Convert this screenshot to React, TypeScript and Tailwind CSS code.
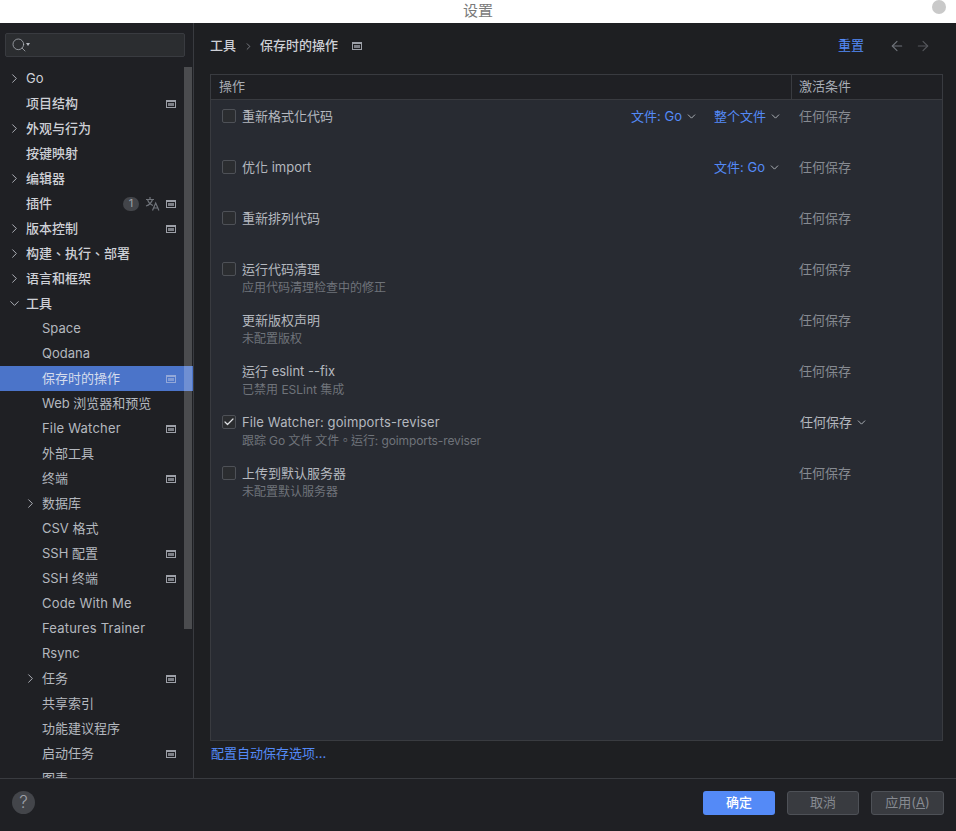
import type { ReactNode } from "react";
import { ChevronDown, ChevronRight, ArrowLeft, ArrowRight, Search, Check } from "lucide-react";

const FONT = "[font-family:Inter,'Noto_Sans_CJK_TC',sans-serif]";

function ProjectIcon({ color = "#9da0a8" }: { color?: string }) {
  return (
    <svg width="10" height="10" viewBox="0 0 10 10" fill="none" aria-hidden="true">
      <rect x="0.5" y="1.5" width="9" height="7" stroke={color} />
      <rect x="2" y="4" width="6" height="3" fill={color} fillOpacity="0.75" />
      <rect x="0.5" y="1.5" width="9" height="1.5" fill={color} />
    </svg>
  );
}

function TranslateIcon() {
  return (
    <svg width="15" height="15" viewBox="0 0 15 15" fill="none" stroke="#6f737a" strokeWidth="1.2" aria-hidden="true">
      <path d="M1 3.500h8M5 1v2.500M2.500 3.500c1 3 3 5 5.500 6M7.500 3.500c-1 3-3 5.500-6.500 6.500" />
      <path d="M7.500 14.500l3.200-7.500 3.200 7.500M8.700 12h4" />
    </svg>
  );
}

interface TreeRow {
  label: string;
  level?: 0 | 1;
  arrow?: "right" | "down";
  project?: boolean;
  selected?: boolean;
  extras?: boolean;
  wide?: boolean;
  thin?: boolean;
}

const tree: TreeRow[] = [
  { label: "Go", arrow: "right", thin: true },
  { label: "项目结构", project: true },
  { label: "外观与行为", arrow: "right" },
  { label: "按键映射" },
  { label: "编辑器", arrow: "right" },
  { label: "插件", project: true, extras: true },
  { label: "版本控制", arrow: "right", project: true },
  { label: "构建、执行、部署", arrow: "right" },
  { label: "语言和框架", arrow: "right" },
  { label: "工具", arrow: "down" },
  { label: "Space", level: 1 },
  { label: "Qodana", level: 1 },
  { label: "保存时的操作", level: 1, project: true, selected: true },
  { label: "Web 浏览器和预览", level: 1 },
  { label: "File Watcher", level: 1, project: true, wide: true },
  { label: "外部工具", level: 1 },
  { label: "终端", level: 1, project: true },
  { label: "数据库", level: 1, arrow: "right" },
  { label: "CSV 格式", level: 1 },
  { label: "SSH 配置", level: 1, project: true },
  { label: "SSH 终端", level: 1, project: true },
  { label: "Code With Me", level: 1, wide: true },
  { label: "Features Trainer", level: 1, wide: true },
  { label: "Rsync", level: 1 },
  { label: "任务", level: 1, arrow: "right", project: true },
  { label: "共享索引", level: 1 },
  { label: "功能建议程序", level: 1 },
  { label: "启动任务", level: 1, project: true },
  { label: "图表", level: 1 },
];

function SidebarRow({ row }: { row: TreeRow }) {
  const sub = row.level === 1;
  return (
    <div className={`relative flex h-[25px] shrink-0 items-center ${row.selected ? "bg-[#4b74c9]" : ""}`}>
      {row.arrow && (
        <span className={`absolute top-[5px] text-[#b4b8bf] ${sub ? "left-[23px]" : "left-[7px]"}`}>
          {row.arrow === "right" ? (
            <ChevronRight size={15} strokeWidth={1.5} />
          ) : (
            <ChevronDown size={15} strokeWidth={1.5} />
          )}
        </span>
      )}
      <span
        className={`text-[13px] ${sub ? "pl-[42px] text-[#b4b8bf]" : "pl-[26px] text-[#ced0d6]"} ${
          sub || row.thin ? "font-normal" : "font-medium"
        } ${row.wide ? "tracking-[0.2px]" : ""} ${row.selected ? "text-[#d5dcec]" : ""}`}
      >
        {row.label}
      </span>
      <div className="ml-auto flex items-center pr-[17px]">
        {row.extras && (
          <>
            <span className="mr-[6px] flex h-[14px] w-[16px] items-center justify-center rounded-full bg-[#43454a] text-[11px] text-[#9da0a8]">
              1
            </span>
            <span className="mr-[6px] flex">
              <TranslateIcon />
            </span>
          </>
        )}
        {row.project && <ProjectIcon color={row.selected ? "#93a8d8" : "#9da0a8"} />}
      </div>
    </div>
  );
}

function Box({ checked = false }: { checked?: boolean }) {
  return (
    <span className="absolute left-[11px] top-[9px] flex h-[14px] w-[14px] items-center justify-center rounded-[2px] border border-[#4e5157] bg-[#2b2d30]">
      {checked && <Check size={12} strokeWidth={2.4} className="text-[#dfe1e5]" />}
    </span>
  );
}

function Picker({ label, className }: { label: string; className: string }) {
  return (
    <span className={`absolute top-[7px] flex items-center whitespace-nowrap text-[13px] text-[#548af7] ${className}`}>
      {label}
      <ChevronDown size={13} strokeWidth={1.7} className="ml-[3px] text-[#b4b8bf]" />
    </span>
  );
}

interface ActionRow {
  title: string;
  sub?: ReactNode;
  box?: boolean;
  checked?: boolean;
  pickers?: { label: string; className: string }[];
}

const actions: ActionRow[] = [
  {
    title: "重新格式化代码",
    box: true,
    pickers: [
      { label: "文件: Go", className: "right-[244px]" },
      { label: "整个文件", className: "right-[160px]" },
    ],
  },
  { title: "优化 import", box: true, pickers: [{ label: "文件: Go", className: "right-[161px]" }] },
  { title: "重新排列代码", box: true },
  { title: "运行代码清理", sub: "应用代码清理检查中的修正", box: true },
  { title: "更新版权声明", sub: "未配置版权" },
  { title: "运行 eslint --fix", sub: "已禁用 ESLint 集成" },
  {
    title: "File Watcher: goimports-reviser",
    sub: (
      <>
        <span className="tracking-[-0.1px]">跟踪 Go 文件 文件。运行: </span>
        <span className="tracking-[-0.12px]">goimports-reviser</span>
      </>
    ),
    box: true,
    checked: true,
  },
  { title: "上传到默认服务器", sub: "未配置默认服务器", box: true },
];

function Action({ row }: { row: ActionRow }) {
  return (
    <div className="relative h-[51px] shrink-0">
      {row.box && <Box checked={row.checked} />}
      <div
        className={`absolute left-[31px] top-[7px] whitespace-nowrap text-[13px] leading-[18px] text-[#b4b8bf] ${
          row.checked ? "tracking-[0.13px]" : ""
        }`}
      >
        {row.title}
      </div>
      {row.sub && (
        <div className="absolute left-[31px] top-[27px] whitespace-nowrap text-[12px] leading-[16px] text-[#6f737a]">
          {row.sub}
        </div>
      )}
      {row.pickers?.map((p) => <Picker key={p.label + p.className} {...p} />)}
      {row.checked ? (
        <span className="absolute left-[589px] top-[7px] flex items-center whitespace-nowrap text-[13px] text-[#b4b8bf]">
          任何保存
          <ChevronDown size={13} strokeWidth={1.7} className="ml-[3px] text-[#b4b8bf]" />
        </span>
      ) : (
        <span className="absolute left-[588px] top-[7px] whitespace-nowrap text-[13px] text-[#868a91]">任何保存</span>
      )}
    </div>
  );
}

export default function App() {
  return (
    <div className={`flex h-[831px] w-[956px] flex-col overflow-hidden bg-[#1e1f22] ${FONT}`}>
      {/* window title */}
      <div className="relative flex h-[23px] shrink-0 items-center justify-center bg-white text-[15px] text-[#7a7a7a]">
        设置
        <span className="absolute right-[10px] top-0 h-[14px] w-[14px] rounded-full bg-[#c9c9c9]" />
      </div>

      <div className="flex min-h-0 flex-1">
        {/* sidebar */}
        <div className="relative flex w-[194px] shrink-0 flex-col overflow-hidden border-r border-[#393b40] bg-[#1f2024]">
          <div className="mx-[5px] mt-[10px] flex h-[24px] w-[180px] shrink-0 items-center rounded-[2px] border border-[#393b40] bg-[#2b2d30] pl-[5px] text-[#b4b8bf]">
            <Search size={16} strokeWidth={1.1} />
            <span className="-ml-[1px] mt-[-2px] h-0 w-0 border-x-[2.500px] border-t-[3px] border-x-transparent border-t-[#b4b8bf]" />
          </div>
          <div className="mt-[9px] flex flex-col">
            {tree.map((row) => (
              <SidebarRow key={row.label} row={row} />
            ))}
          </div>
          <div className="absolute left-[184px] top-[44px] h-[562px] w-[8px] bg-white/20" />
        </div>

        {/* content */}
        <div className="flex min-w-0 flex-1 flex-col pl-[16px] pr-[13px]">
          <div className="mb-[5px] flex h-[46px] shrink-0 items-center text-[13px] font-medium text-[#ced0d6]">
            <span>工具</span>
            <ChevronRight size={11} strokeWidth={1.5} className="ml-[7px] mr-[6px] text-[#9da0a8]" />
            <span>保存时的操作</span>
            <span className="ml-[14px] flex">
              <ProjectIcon />
            </span>
            <span className="ml-auto text-[13px] font-normal text-[#548af7]">重置</span>
            <ArrowLeft size={16} strokeWidth={1.7} className="ml-[25px] text-[#6f737a]" />
            <ArrowRight size={16} strokeWidth={1.7} className="ml-[10px] mr-[12px] text-[#55575c]" />
          </div>

          <div className="flex h-[667px] shrink-0 flex-col border border-[#393b40] bg-[#282b32]">
            <div className="flex h-[25px] shrink-0 items-center border-b border-[#393b40] bg-[#1f2024] text-[13px] text-[#a8adb5]">
              <span className="pl-[8px]">操作</span>
              <span className="ml-auto flex h-[24px] w-[151px] items-center border-l border-[#393b40] pl-[7px]">
                激活条件
              </span>
            </div>
            {actions.map((row) => (
              <Action key={row.title} row={row} />
            ))}
          </div>

          <div className="ml-[1px] mt-[4px] text-[13px] leading-[16px] text-[#548af7]">配置自动保存选项...</div>
        </div>
      </div>

      {/* footer */}
      <div className="flex h-[53px] shrink-0 items-start border-t border-[#393b40] bg-[#1f2024] pl-[12px] pr-[12px] pt-[12px]">
        <span className="flex h-[23px] w-[23px] items-center justify-center rounded-full bg-[#43454a] text-[17px] font-light text-[#9da0a8]">
          ?
        </span>
        <button className="ml-auto h-[24px] w-[72px] rounded-[3px] bg-[#548af7] text-[13px] font-medium text-white">
          确定
        </button>
        <button className="ml-[12px] h-[24px] w-[72px] rounded-[3px] border border-[#4e5157] bg-[#393b40] text-[13px] text-[#868a91]">
          取消
        </button>
        <button className="ml-[12px] h-[24px] w-[73px] rounded-[3px] border border-[#4e5157] bg-[#393b40] text-[13px] text-[#868a91]">
          应用(<span className="underline">A</span>)
        </button>
      </div>
    </div>
  );
}
